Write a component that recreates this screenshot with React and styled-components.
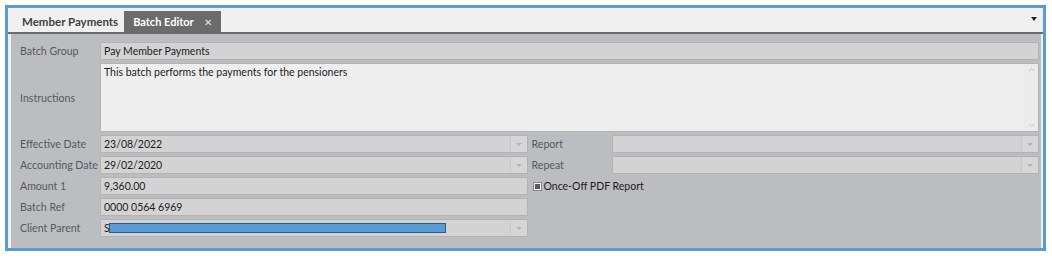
import React from 'react';
import styled, { createGlobalStyle } from 'styled-components';

const GlobalStyle = createGlobalStyle`
  body {
    margin: 0;
    background: #ffffff;
    font-family: Lato, "Noto Sans", sans-serif;
    font-size: 11px;
  }
`;

const Frame = styled.div`
  margin: 5px;
  width: 1035px;
  height: 240px;
  border: 3px solid #5b9bd5;
  background: #f0f0f0;
  display: flex;
  flex-direction: column;
`;

const TabBar = styled.div`
  height: 24px;
  flex-shrink: 0;
  border-bottom: 2px solid #6b6b6b;
  display: flex;
  align-items: flex-end;
  padding-left: 8px;
  position: relative;
`;

const Tab = styled.div`
  height: 21px;
  display: flex;
  align-items: center;
  gap: 10px;
  padding: 0 ${p => (p.$active ? '9px' : '6px')};
  background: ${p => (p.$active ? '#6b6b6b' : 'transparent')};
  color: ${p => (p.$active ? '#ffffff' : '#3f3f3f')};
  font-weight: 700;
  font-size: ${p => (p.$active ? '11px' : '11.5px')};
`;

const Close = styled.span`
  font-weight: 400;
  font-size: 10px;
  color: #e6e6e6;
`;

const MenuArrow = styled.div`
  position: absolute;
  right: 6px;
  top: 9px;
  width: 0;
  height: 0;
  border-left: 3px solid transparent;
  border-right: 3px solid transparent;
  border-top: 4px solid #222;
`;

const Content = styled.div`
  flex: 1;
  margin: 0 2px 0 3px;
  background: #bcbdc1;
  padding: 8px 2px 0 9px;
  display: grid;
  grid-template-columns: 80px 1fr 84px 1fr;
  grid-template-rows: 18px 69px repeat(5, 18px);
  row-gap: 3px;
  align-content: start;
`;

const Label = styled.div`
  color: #555a60;
  font-size: 10.6px;
  display: flex;
  align-items: center;
  white-space: nowrap;
  padding-left: ${p => (p.$inset ? '4px' : '0')};
`;

const Field = styled.div`
  grid-column: ${p => p.$span || 'auto'};
  background: #d3d3d3;
  border: 1px solid #b3b3b3;
  color: #1c1c1c;
  font-size: 10.5px;
  display: flex;
  align-items: center;
  padding-left: 3px;
  overflow: hidden;
  white-space: nowrap;
`;

const TextArea = styled.div`
  grid-column: 2 / 5;
  background: #eeeeee;
  border: 1px solid #b3b3b3;
  color: #1c1c1c;
  font-size: 10.5px;
  display: flex;
  justify-content: space-between;
`;

const AreaText = styled.div`
  padding: 2px 3px;
`;

const ScrollBar = styled.div`
  width: 14px;
  background: #ebebeb;
  display: flex;
  flex-direction: column;
  justify-content: space-between;
  align-items: center;
  padding: 3px 0;
`;

const Chevron = styled.svg`
  width: 7px;
  height: 5px;
  fill: none;
  stroke: #c2c2c2;
  stroke-width: 1;
`;

const DropButton = styled.div`
  margin-left: auto;
  width: 16px;
  align-self: stretch;
  border-left: 1px solid #c8c8c8;
  background: #d6d6d6;
  display: flex;
  align-items: center;
  justify-content: center;
  &::after {
    content: '';
    border-left: 3px solid transparent;
    border-right: 3px solid transparent;
    border-top: 3px solid #b4b4b4;
  }
`;

const CheckRow = styled.div`
  grid-column: 3 / 5;
  display: flex;
  align-items: center;
  gap: 3px;
  padding-left: 6px;
  color: #1c1c1c;
  font-size: 10.5px;
`;

const CheckBox = styled.span`
  width: 5px;
  height: 5px;
  border: 1px solid #f4f4f4;
  background: #5a5a5a;
  box-shadow: 0 0 0 1px #8a8a8a;
`;

const Redaction = styled.span`
  display: inline-block;
  width: 335px;
  height: 8px;
  background: #5b9bd5;
  border: 1px solid #2e5c87;
  margin-left: -1px;
`;

const Combo = ({ children }) => (
  <Field>
    {children}
    <DropButton />
  </Field>
);

export default function App() {
  return (
    <>
      <GlobalStyle />
      <Frame>
        <TabBar>
          <Tab>Member Payments</Tab>
          <Tab $active>
            Batch Editor <Close>✕</Close>
          </Tab>
          <MenuArrow />
        </TabBar>
        <Content>
          <Label>Batch Group</Label>
          <Field $span="2 / 5">Pay Member Payments</Field>

          <Label>Instructions</Label>
          <TextArea>
            <AreaText>This batch performs the payments for the pensioners</AreaText>
            <ScrollBar>
              <Chevron viewBox="0 0 7 5"><path d="M1 4 L3.5 1.5 L6 4" /></Chevron>
              <Chevron viewBox="0 0 7 5"><path d="M1 1 L3.5 3.5 L6 1" /></Chevron>
            </ScrollBar>
          </TextArea>

          <Label>Effective Date</Label>
          <Combo>23/08/2022</Combo>
          <Label $inset>Report</Label>
          <Combo />

          <Label>Accounting Date</Label>
          <Combo>29/02/2020</Combo>
          <Label $inset>Repeat</Label>
          <Combo />

          <Label>Amount 1</Label>
          <Field>9,360.00</Field>
          <CheckRow>
            <CheckBox />
            Once-Off PDF Report
          </CheckRow>

          <Label>Batch Ref</Label>
          <Field>0000 0564 6969</Field>
          <div />
          <div />

          <Label>Client Parent</Label>
          <Combo>
            S<Redaction />
          </Combo>
        </Content>
      </Frame>
    </>
  );
}
